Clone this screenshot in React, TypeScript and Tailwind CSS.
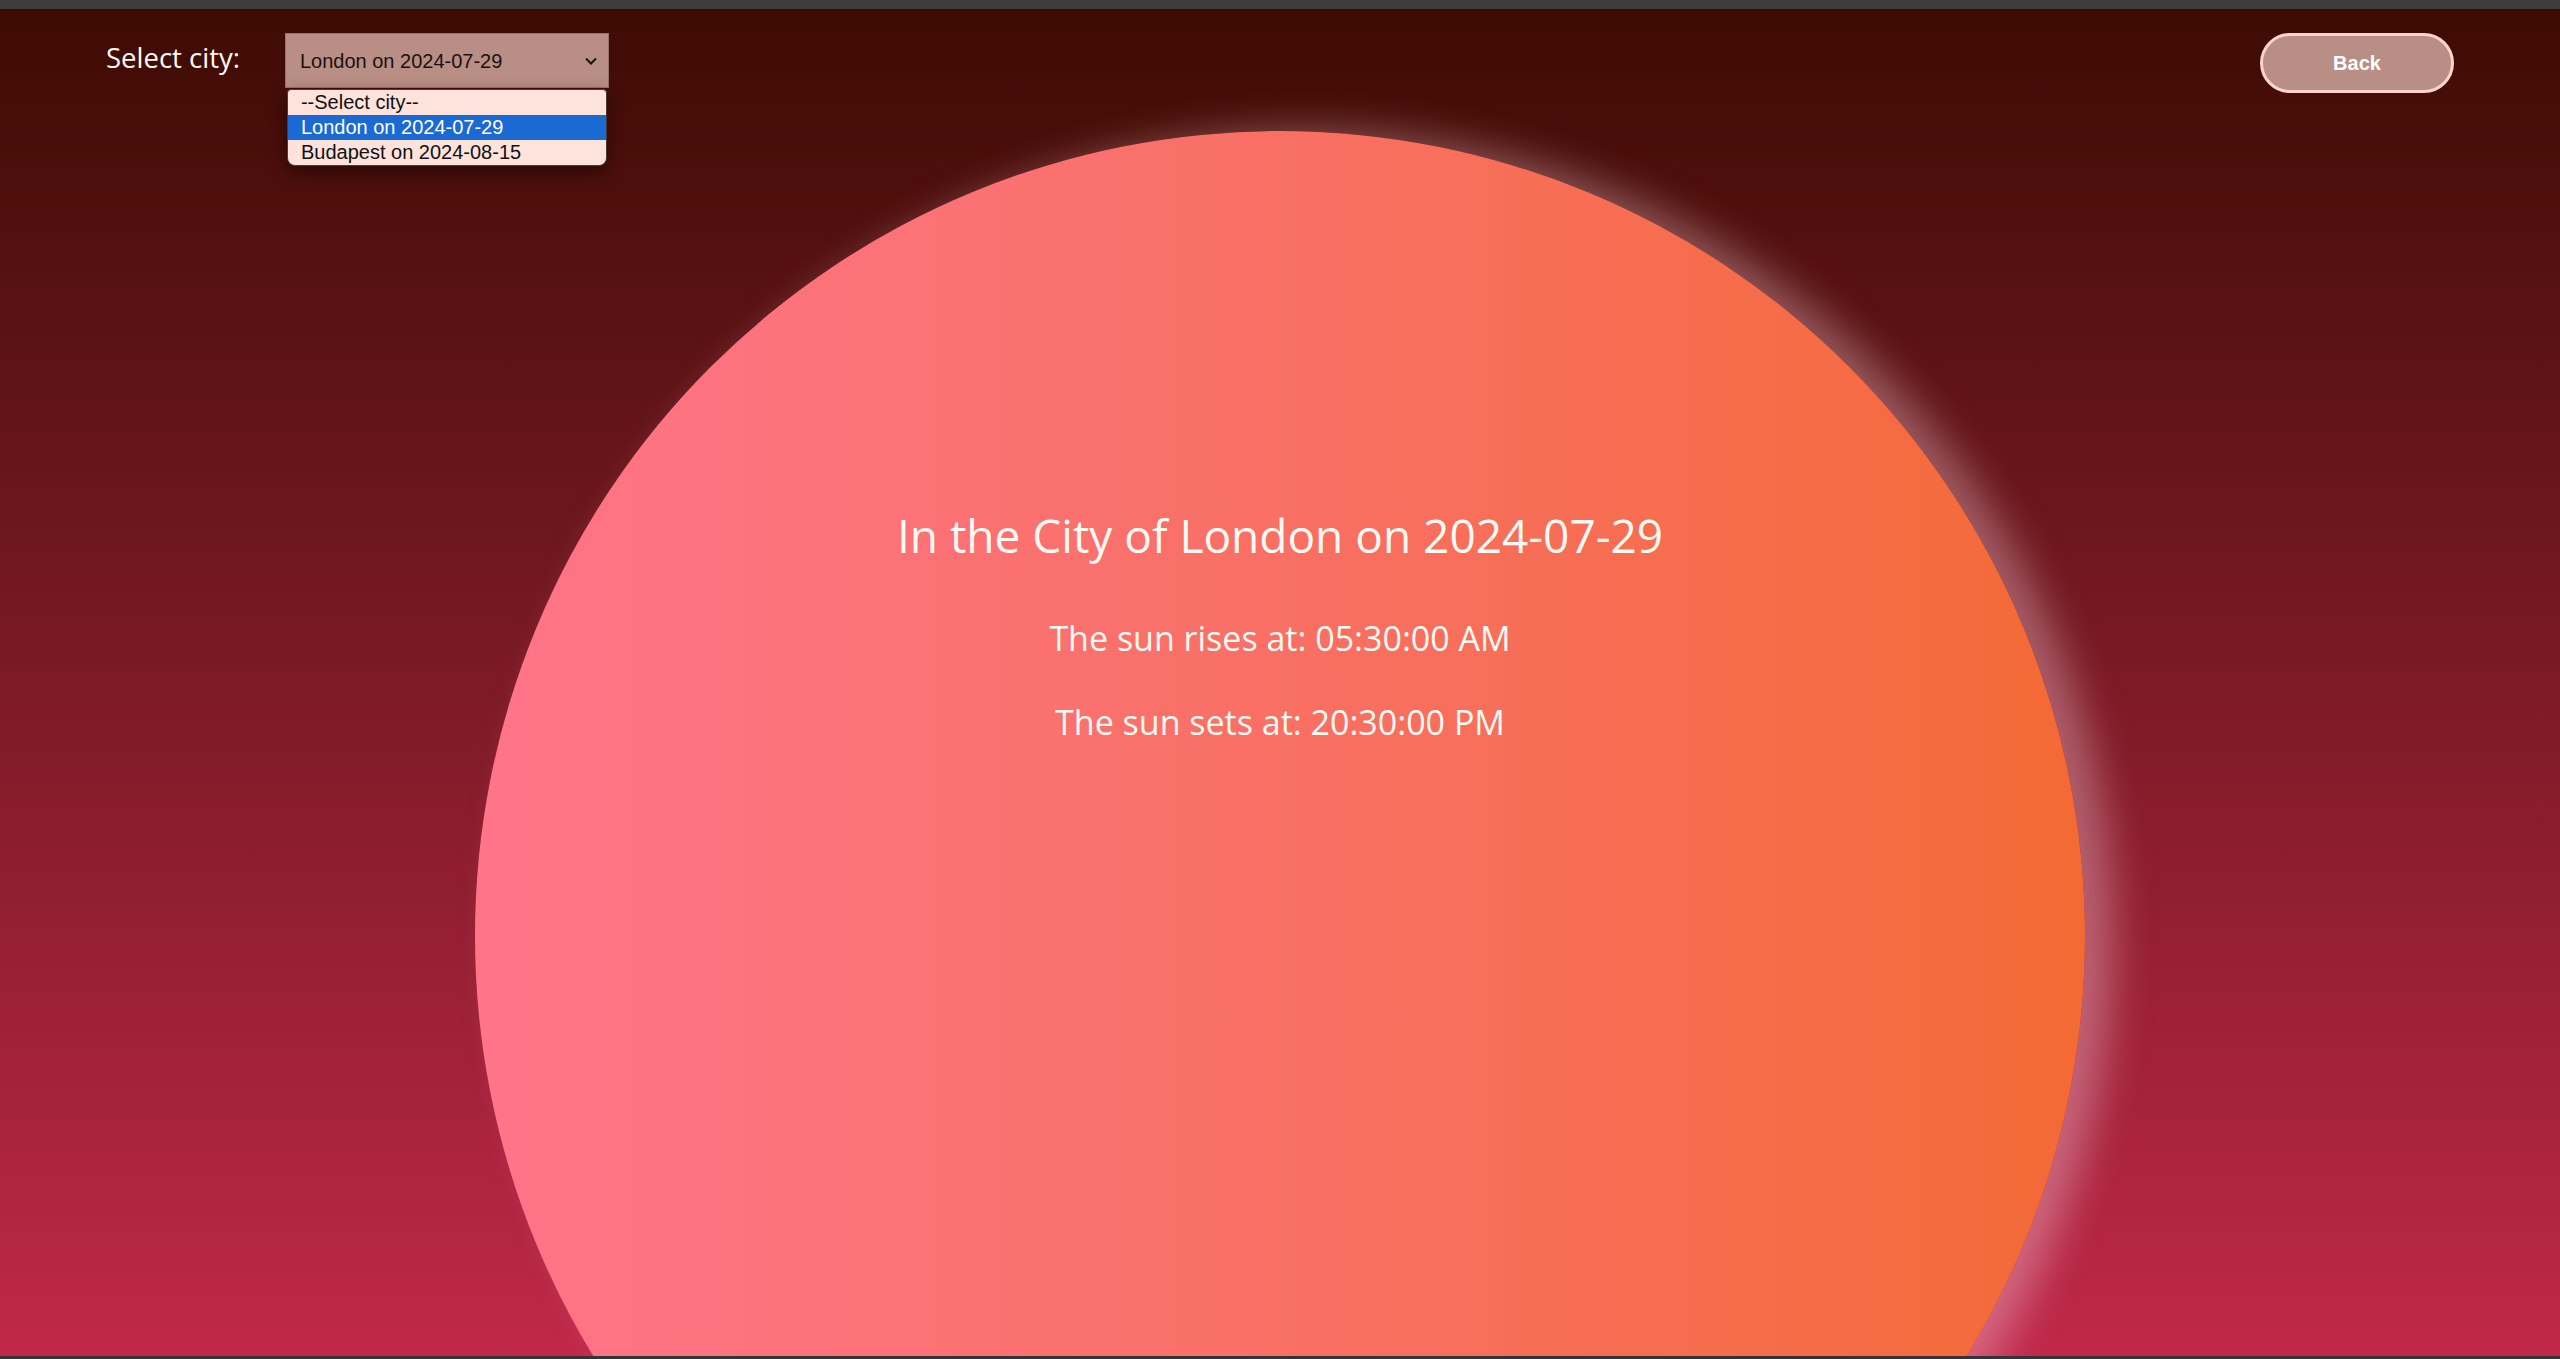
import { useState } from "react";

const cities = [
  { value: "", label: "--Select city--" },
  { value: "london", label: "London on 2024-07-29" },
  { value: "budapest", label: "Budapest on 2024-08-15" },
];

const App = () => {
  const [selected] = useState("london");

  return (
    <div className="relative flex h-[1359px] w-full flex-col overflow-hidden bg-gradient-to-b from-[#3d0b03] to-[#c1284a]">
      {/* browser strip */}
      <div className="h-[9px] shrink-0 bg-[#3c3c3c]" />

      <header className="relative z-10 flex shrink-0 items-start justify-between px-[106px] pt-[24px]">
        <div className="flex items-start">
          <label
            className="mt-[7px] text-[27.5px] leading-[36px] text-[#fff8f2]"
            style={{ fontFamily: '"Open Sans", sans-serif' }}
          >
            Select city:
          </label>

          <div className="relative ml-[45px]">
            <div
              className="flex h-[55px] w-[324px] items-center justify-between border border-[#8f7670] bg-[#b98e85] pl-[14px] pr-[10px] text-[20px] text-[#1a1210]"
              style={{ fontFamily: '"Liberation Sans", Arial, sans-serif' }}
            >
              <span>London on 2024-07-29</span>
              <svg width="14" height="10" viewBox="0 0 14 10" fill="none">
                <path d="M2 2.5 7 7.5 12 2.5" stroke="#1a1210" strokeWidth="2" />
              </svg>
            </div>

            {/* open option list */}
            <div
              className="absolute left-[2px] top-[56px] w-[320px] overflow-hidden rounded-b-[8px] rounded-t-[4px] border border-[#4a3a38] bg-[#fde3dc] text-[20px] leading-[25px] text-[#111] shadow-[0_6px_18px_rgba(0,0,0,0.45)]"
              style={{ fontFamily: '"Liberation Sans", Arial, sans-serif' }}
            >
              {cities.map((c) => (
                <div
                  key={c.value}
                  className={
                    c.value === selected
                      ? "bg-[#1b69d3] pl-[13px] text-white"
                      : "pl-[13px]"
                  }
                >
                  {c.label}
                </div>
              ))}
            </div>
          </div>
        </div>

        <button
          className="h-[60px] w-[194px] rounded-full border-[3px] border-[#fcd4cb] bg-[#b98e85] text-[20px] font-bold text-white"
          style={{ fontFamily: '"Liberation Sans", Arial, sans-serif' }}
        >
          Back
        </button>
      </header>

      <main className="flex shrink-0 justify-center pt-[38px]">
        <div
          className="flex h-[1610px] w-[1610px] shrink-0 flex-col items-center rounded-full bg-gradient-to-r from-[#ff7489] to-[#f36a34] pt-[372px] text-[#fff9f4] shadow-[28px_0_40px_rgba(255,220,230,0.36)]"
          style={{ fontFamily: '"Open Sans", sans-serif' }}
        >
          <h1 className="text-[46px] leading-[64px]">In the City of London on 2024-07-29</h1>
          <p className="mt-[47px] text-[34px] leading-[48px]">The sun rises at: 05:30:00 AM</p>
          <p className="mt-[36px] text-[34px] leading-[48px]">The sun sets at: 20:30:00 PM</p>
        </div>
      </main>

      <div className="absolute bottom-0 left-0 h-[3px] w-full bg-[#2f3538]" />
    </div>
  );
};

export default App;
